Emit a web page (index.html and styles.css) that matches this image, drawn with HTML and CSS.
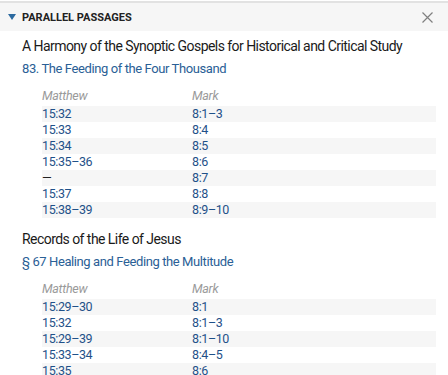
FILE: index.html
```html
<!DOCTYPE html>
<html lang="en">
<head>
    <meta charset="UTF-8">
    <title>Parallel Passages</title>
    <link rel="stylesheet" href="styles.css">
</head>
<body>
    <div class="panel">
        <div class="panel-header">
            <span class="caret"></span>
            <span class="panel-title">Parallel Passages</span>
            <svg class="close" width="11" height="11" viewBox="0 0 11 11">
                <path d="M0.5 0.5 L10.5 10.5 M10.5 0.5 L0.5 10.5" stroke="#808080" stroke-width="1.2" fill="none"/>
            </svg>
        </div>

        <div class="source">
            <div class="source-title">A Harmony of the Synoptic Gospels for Historical and Critical Study</div>
            <a class="source-link" href="#">83. The Feeding of the Four Thousand</a>
            <table class="refs">
                <tr><th>Matthew</th><th>Mark</th></tr>
                <tr><td><a href="#">15:32</a></td><td><a href="#">8:1–3</a></td></tr>
                <tr><td><a href="#">15:33</a></td><td><a href="#">8:4</a></td></tr>
                <tr><td><a href="#">15:34</a></td><td><a href="#">8:5</a></td></tr>
                <tr><td><a href="#">15:35–36</a></td><td><a href="#">8:6</a></td></tr>
                <tr><td class="none">—</td><td><a href="#">8:7</a></td></tr>
                <tr><td><a href="#">15:37</a></td><td><a href="#">8:8</a></td></tr>
                <tr><td><a href="#">15:38–39</a></td><td><a href="#">8:9–10</a></td></tr>
            </table>
        </div>

        <div class="source">
            <div class="source-title">Records of the Life of Jesus</div>
            <a class="source-link" href="#">§ 67 Healing and Feeding the Multitude</a>
            <table class="refs">
                <tr><th>Matthew</th><th>Mark</th></tr>
                <tr><td><a href="#">15:29–30</a></td><td><a href="#">8:1</a></td></tr>
                <tr><td><a href="#">15:32</a></td><td><a href="#">8:1–3</a></td></tr>
                <tr><td><a href="#">15:29–39</a></td><td><a href="#">8:1–10</a></td></tr>
                <tr><td><a href="#">15:33–34</a></td><td><a href="#">8:4–5</a></td></tr>
                <tr><td><a href="#">15:35</a></td><td><a href="#">8:6</a></td></tr>
            </table>
        </div>
    </div>
</body>
</html>
```

FILE: styles.css
```css
/* General styles */
body {
    margin: 0;
    padding: 0;
    background-color: #fff;
    font-family: Roboto, "Noto Sans", sans-serif;
    color: #1a1a1a;
    overflow: hidden;
}

.panel {
    border-top: 2px solid #e2e2e2;
    margin-top: 1px;
}

/* Header bar */
.panel-header {
    display: flex;
    align-items: center;
    height: 28px;
    background-color: #f6f6f6;
    padding: 0 15px 0 8px;
}

.caret {
    width: 0;
    height: 0;
    border-left: 4px solid transparent;
    border-right: 4px solid transparent;
    border-top: 6px solid #2c6aa0;
    margin-right: 6px;
}

.panel-title {
    font-size: 11px;
    font-weight: bold;
    text-transform: uppercase;
    color: #222;
    flex-grow: 1;
}

.close {
    display: block;
}

/* Sources */
.source {
    padding: 0 12px 0 22px;
}

.source-title {
    font-size: 14px;
    line-height: 20px;
    margin-top: 5px;
    letter-spacing: -0.55px;
    white-space: nowrap;
}

.source-link {
    display: block;
    font-size: 13px;
    line-height: 20px;
    margin-top: 3px;
    letter-spacing: -0.4px;
    color: #2a6096;
    text-decoration: none;
}

.refs {
    border-collapse: collapse;
    margin: 5px 0 11px 20px;
    width: calc(100% - 20px);
}

.refs th {
    font-weight: normal;
    font-style: italic;
    color: #9a9a9a;
    font-size: 12.5px;
    letter-spacing: -0.3px;
    text-align: left;
    height: 22px;
    padding: 0;
}

.refs td {
    font-size: 12.5px;
    letter-spacing: -0.4px;
    height: 16px;
    line-height: 16px;
    padding: 0;
}

.refs th:first-child,
.refs td:first-child {
    width: 150px;
}

.refs tr:nth-child(even) td {
    background-color: #f6f6f6;
}

.refs a {
    color: #1f5189;
    text-decoration: none;
}

.none {
    color: #222;
}
```
